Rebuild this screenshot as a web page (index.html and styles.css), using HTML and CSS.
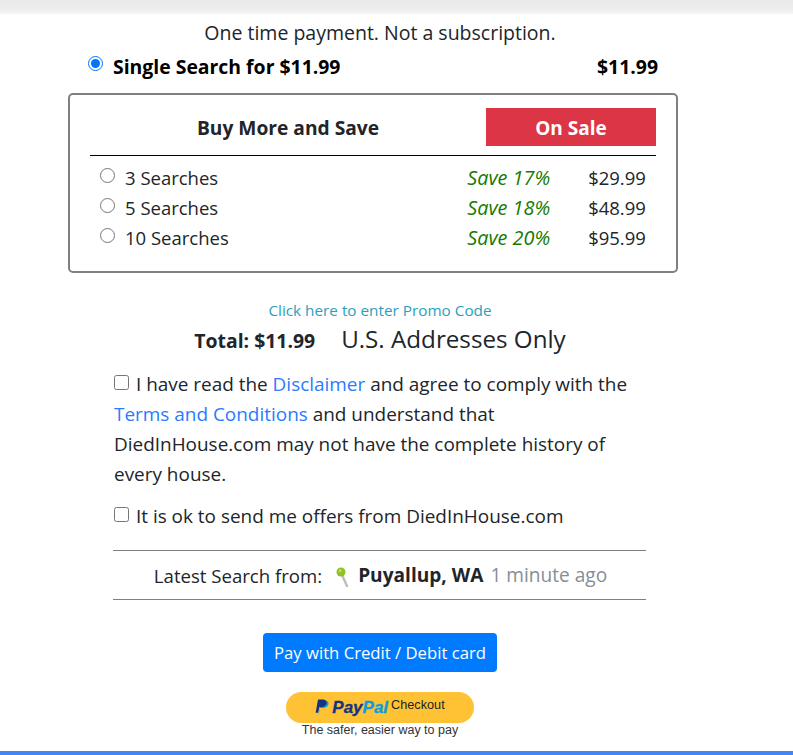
FILE: index.html
```html
<!DOCTYPE html>
<html lang="en">
<head>
<meta charset="utf-8">
<title>Checkout</title>
<link rel="stylesheet" href="styles.css">
</head>
<body>
<div class="top-band"></div>
<main class="column">
  <p class="headline">One time payment. Not a subscription.</p>
  <div class="single">
    <label class="single-label"><input class="radio" type="radio" name="plan" checked> <span>Single Search for $11.99</span></label>
    <span class="single-price">$11.99</span>
  </div>
  <section class="box">
    <div class="box-head">
      <div class="box-title">Buy More and Save</div>
      <div class="sale">On Sale</div>
    </div>
    <div class="plan"><label class="plan-name"><input class="radio" type="radio" name="plan"> <span>3 Searches</span></label><em class="save">Save 17%</em><span class="price">$29.99</span></div>
    <div class="plan"><label class="plan-name"><input class="radio" type="radio" name="plan"> <span>5 Searches</span></label><em class="save">Save 18%</em><span class="price">$48.99</span></div>
    <div class="plan"><label class="plan-name"><input class="radio" type="radio" name="plan"> <span>10 Searches</span></label><em class="save">Save 20%</em><span class="price">$95.99</span></div>
  </section>
  <a class="promo" href="#">Click here to enter Promo Code</a>
  <div class="total"><strong>Total: $11.99</strong><span class="only">U.S. Addresses Only</span></div>
  <div class="terms">
    <p class="para"><input class="check" type="checkbox"> I have read the <a href="#">Disclaimer</a> and agree to comply with the <a href="#">Terms and Conditions</a> and understand that DiedInHouse.com may not have the complete history of every house.</p>
    <p class="para offers"><input class="check" type="checkbox"> It is ok to send me offers from DiedInHouse.com</p>
  </div>
  <div class="latest">
    <span class="from">Latest Search from:</span>
    <svg class="pin" viewBox="0 0 14 20" width="14" height="20" aria-hidden="true">
      <path d="M6 8 L11 19" stroke="#bdbdbd" stroke-width="2.4" stroke-linecap="round"/>
      <circle cx="5" cy="5" r="4.5" fill="#8fc31f"/>
      <circle cx="4" cy="3.8" r="1.4" fill="#c4e27a"/>
    </svg>
    <strong class="city">Puyallup, WA</strong>
    <span class="ago">1 minute ago</span>
  </div>
  <div class="actions"><button class="card-btn" type="button">Pay with Credit / Debit card</button></div>
  <div class="paypal">
    <div class="pp-btn">
      <svg class="pp-mark" viewBox="0 0 14 17" width="14" height="17" aria-hidden="true">
        <path d="M3.6 16 L5 9 H7.6 C10.8 9 13 7.6 13.5 5 C13.9 2.8 12.2 1.8 10 1.8 H6 L3.4 16 Z" fill="#0f9bdc"/>
        <path d="M0.6 13.8 L3 0.4 H7.8 C10.4 0.4 12 1.6 11.6 4 C11.2 6.8 9 8 6.2 8 H4.3 L3.3 13.8 Z" fill="#15337f"/>
      </svg>
      <span class="pp-word"><span class="pp-pay">Pay</span><span class="pp-pal">Pal</span></span>
      <span class="pp-check">Checkout</span>
    </div>
    <div class="pp-tag">The safer, easier way to pay</div>
  </div>
</main>
<div class="bottom-band"></div>
</body>
</html>
```
FILE: styles.css
```css
* { box-sizing: border-box; }
html, body { margin: 0; padding: 0; }
body {
  height: 755px;
  overflow: hidden;
  background: #fff;
  color: #212529;
  font-family: "Open Sans", "Noto Sans", sans-serif;
  font-size: 18px;
  display: flex;
  flex-direction: column;
}
p { margin: 0; }
a { color: #2a7bff; text-decoration: none; }
.top-band {
  height: 14px;
  flex: none;
  background: linear-gradient(#eaeaea 0, #ececec 60%, #f5f5f5 100%);
}
.column {
  flex: 1;
  width: 624px;
  margin-left: 68px;
  display: flex;
  flex-direction: column;
}
.headline {
  margin-top: 6px;
  text-align: center;
  font-size: 19.5px;
  line-height: 26px;
}
.single {
  margin-top: 5px;
  height: 30px;
  width: 570px;
  margin-left: 20px;
  display: flex;
  justify-content: space-between;
  align-items: center;
  color: #000;
  font-weight: 700;
  font-size: 19.4px;
}
.single-label { display: flex; align-items: center; gap: 10px; }
.single .radio { position: relative; top: -3px; }
.radio { margin: 0; width: 15px; height: 15px; flex: none; accent-color: #0075ff; }
.box {
  margin-top: 12px;
  width: 610px;
  height: 180px;
  border: 2px solid #808080;
  border-radius: 5px;
  padding: 13px 20px 0;
}
.box-head {
  height: 48px;
  display: flex;
  align-items: flex-start;
  border-bottom: 1px solid #000;
}
.box-title {
  width: 396px;
  line-height: 40px;
  text-align: center;
  font-weight: 700;
  font-size: 19.2px;
}
.sale {
  width: 170px;
  height: 38px;
  line-height: 40px;
  background: #dc3545;
  color: #fff;
  text-align: center;
  font-weight: 700;
  font-size: 19px;
}
.plan {
  height: 30px;
  display: flex;
  align-items: center;
  font-size: 18.5px;
}
.box-head + .plan { margin-top: 6px; }
.plan-name { width: 378px; padding-left: 10px; display: flex; align-items: center; gap: 10px; }
.plan-name .radio { position: relative; top: -2px; }
.save { width: 121px; color: #157a00; font-size: 19.8px; }
.price { width: 68px; font-size: 18.5px; }
.promo {
  margin-top: 27px;
  text-align: center;
  color: #2b9fbb;
  font-size: 15.3px;
  line-height: 20px;
}
.total {
  margin-top: 2px;
  display: flex;
  justify-content: center;
  align-items: baseline;
  gap: 26px;
  line-height: 34px;
}
.total strong { font-size: 19.4px; }
.only { font-size: 24.2px; font-weight: 500; }
.terms { margin-top: 11px; padding: 0 46px; }
.para { line-height: 30px; font-size: 18.95px; }
.offers { margin-top: 12px; }
.check { margin: 0 2px 0 0; width: 15px; height: 15px; vertical-align: 1px; }
.latest {
  margin: 19px 46px 0 45px;
  height: 50px;
  padding-left: 2px;
  border-top: 1px solid #808080;
  border-bottom: 1px solid #808080;
  display: flex;
  justify-content: center;
  align-items: center;
  gap: 7px;
  font-size: 18.6px;
}
.city { font-size: 19.1px; color: #212529; }
.ago { color: #868e96; font-size: 19.1px; }
.pin { margin: 3px 1px 0 7px; }
.actions { margin-top: 33px; display: flex; justify-content: center; }
.card-btn {
  width: 234px;
  height: 39px;
  padding: 0;
  border: 0;
  border-radius: 4px;
  background: #007bff;
  color: #fff;
  font-family: inherit;
  font-size: 16.7px;
}
.paypal { margin-top: 20px; display: flex; flex-direction: column; align-items: center; }
.pp-btn {
  width: 188px;
  height: 31px;
  border-radius: 16px;
  background: #ffc235;
  display: flex;
  justify-content: center;
  align-items: center;
  gap: 3px;
}
.pp-word {
  font-family: "Liberation Sans", sans-serif;
  font-style: italic;
  font-weight: 700;
  font-size: 17px;
  -webkit-text-stroke: 0.3px currentColor;
}
.pp-pay { color: #15337f; }
.pp-pal { color: #0f9bdc; }
.pp-check {
  font-family: "Liberation Sans", sans-serif;
  font-size: 12.7px;
  color: #222;
  position: relative;
  top: -3px;
}
.pp-tag {
  font-family: "Liberation Sans", sans-serif;
  font-size: 12.5px;
  line-height: 15px;
  color: #333;
}
.bottom-band { flex: none; height: 4px; background: #4285f4; }
```
